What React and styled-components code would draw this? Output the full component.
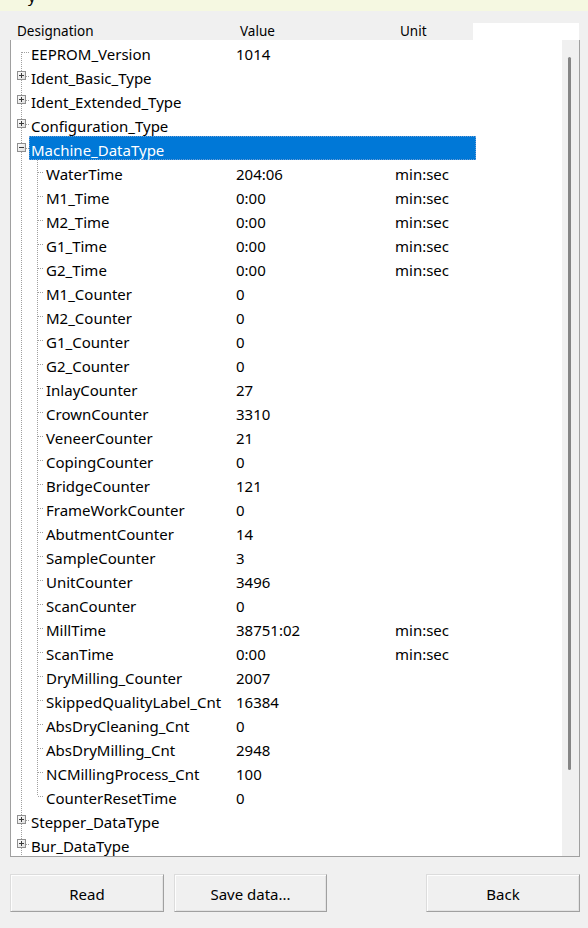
import React from "react";
import styled, { createGlobalStyle } from "styled-components";

const GlobalStyle = createGlobalStyle`
  html, body { margin: 0; padding: 0; background: #f0f0f0; }
  body { font-family: "Noto Sans", "Open Sans", sans-serif; color: #000; }
`;

const Page = styled.div`
  width: 588px;
  height: 928px;
  background: #f0f0f0;
  overflow: hidden;
`;

const TopStrip = styled.div`
  height: 11px;
  background: #f5f8e1;
  overflow: hidden;
`;

const StripText = styled.div`
  margin-top: -16px;
  padding-left: 28px;
  font-size: 15px;
  line-height: 24px;
`;

const Header = styled.div`
  display: flex;
  margin: 12px 0 0 10px;
  width: 569px;
  height: 17px;
`;

const HeaderCells = styled.div`
  display: flex;
  width: 463px;
  padding-left: 7px;
  box-sizing: border-box;
  font-size: 13.5px;
  line-height: 17px;
`;

const HeaderCell = styled.div`
  width: ${(p) => p.$w}px;
  flex: 0 0 auto;
`;

const HeaderFiller = styled.div`
  flex: 1;
  background: #fff;
`;

const TreeBox = styled.div`
  display: flex;
  margin-left: 10px;
  width: 570px;
  height: 817px;
  box-sizing: border-box;
  border: 1px solid #a0a0a0;
  border-top: none;
`;

const TreeContent = styled.div`
  flex: 1;
  background: #fff;
  overflow: hidden;
`;

const ScrollBar = styled.div`
  width: 17px;
  background: #f0f0f0;
  padding-top: 17px;
  box-sizing: border-box;
`;

const Thumb = styled.div`
  width: 3px;
  height: 713px;
  margin-left: 6px;
  background: #858585;
  border-radius: 2px;
`;

const Row = styled.div`
  display: flex;
  height: 24px;
  font-size: 15px;
`;

const Gutter = styled.svg`
  flex: 0 0 auto;
  display: block;
`;

const Body = styled.div`
  display: flex;
  height: 24px;
  box-sizing: border-box;
  padding: 4px 0 0 2px;
  line-height: 20px;
  ${(p) =>
    p.$selected
      ? `width: 447px; flex: 0 0 auto; background: #0078d7; color: #fff; outline: 1px dotted #6b9ed6; outline-offset: -1px;`
      : `flex: 1;`}
`;

const Label = styled.div`
  width: ${(p) => p.$w}px;
  flex: 0 0 auto;
  white-space: nowrap;
`;

const Value = styled.div`
  width: 159px;
  flex: 0 0 auto;
  white-space: nowrap;
`;

const Unit = styled.div`
  flex: 1;
  white-space: nowrap;
`;

const ButtonRow = styled.div`
  display: flex;
  margin-top: 17px;
  padding-left: 10px;
`;

const Button = styled.button`
  width: ${(p) => p.$w}px;
  height: 38px;
  margin-right: ${(p) => p.$gap}px;
  background: #f0f0f0;
  border: 1px solid;
  border-color: #dcdcdc #a0a0a0 #a0a0a0 #dcdcdc;
  box-shadow: inset 1px 1px #fdfdfd, inset -1px -1px #e3e3e3;
  font-family: "Noto Sans", "Open Sans", sans-serif;
  font-size: 15px;
  line-height: 20px;
  padding: 2px 0 0;
  color: #000;
`;

const LINE = "#a0a0a0";

function VLine({ x, y1, y2 }) {
  return (
    <line x1={x + 0.5} y1={y1} x2={x + 0.5} y2={y2} stroke={LINE} strokeDasharray="1 1" shapeRendering="crispEdges" />
  );
}
function HLine({ x1, x2, y }) {
  return (
    <line x1={x1} y1={y + 0.5} x2={x2} y2={y + 0.5} stroke={LINE} strokeDasharray="1 1" shapeRendering="crispEdges" />
  );
}

function ExpandBox({ open }) {
  return (
    <g shapeRendering="crispEdges">
      <defs>
        <linearGradient id="bx" x1="0" y1="0" x2="1" y2="1">
          <stop offset="0" stopColor="#ffffff" />
          <stop offset="1" stopColor="#dcdcdc" />
        </linearGradient>
      </defs>
      <rect x="6.5" y="7.5" width="8" height="8" fill="url(#bx)" stroke="#8f8f8f" />
      <line x1="8" y1="11.5" x2="13" y2="11.5" stroke="#3a3a3a" />
      {!open && <line x1="10.5" y1="9" x2="10.5" y2="14" stroke="#3a3a3a" />}
    </g>
  );
}

function TopGutter({ kind, first }) {
  return (
    <Gutter width="18" height="24" viewBox="0 0 18 24">
      <VLine x={10} y1={first ? 12 : 0} y2={24} />
      {kind === "leaf" ? (
        <HLine x1={11} x2={18} y={12} />
      ) : (
        <>
          <HLine x1={15} x2={18} y={12} />
          <ExpandBox open={kind === "open"} />
        </>
      )}
    </Gutter>
  );
}

function ChildGutter({ last }) {
  return (
    <Gutter width="33" height="24" viewBox="0 0 33 24">
      <VLine x={10} y1={0} y2={24} />
      <VLine x={26} y1={0} y2={last ? 12 : 24} />
      <HLine x1={27} x2={33} y={12} />
    </Gutter>
  );
}

const children = [
  ["WaterTime", "204:06", "min:sec"],
  ["M1_Time", "0:00", "min:sec"],
  ["M2_Time", "0:00", "min:sec"],
  ["G1_Time", "0:00", "min:sec"],
  ["G2_Time", "0:00", "min:sec"],
  ["M1_Counter", "0", ""],
  ["M2_Counter", "0", ""],
  ["G1_Counter", "0", ""],
  ["G2_Counter", "0", ""],
  ["InlayCounter", "27", ""],
  ["CrownCounter", "3310", ""],
  ["VeneerCounter", "21", ""],
  ["CopingCounter", "0", ""],
  ["BridgeCounter", "121", ""],
  ["FrameWorkCounter", "0", ""],
  ["AbutmentCounter", "14", ""],
  ["SampleCounter", "3", ""],
  ["UnitCounter", "3496", ""],
  ["ScanCounter", "0", ""],
  ["MillTime", "38751:02", "min:sec"],
  ["ScanTime", "0:00", "min:sec"],
  ["DryMilling_Counter", "2007", ""],
  ["SkippedQualityLabel_Cnt", "16384", ""],
  ["AbsDryCleaning_Cnt", "0", ""],
  ["AbsDryMilling_Cnt", "2948", ""],
  ["NCMillingProcess_Cnt", "100", ""],
  ["CounterResetTime", "0", ""],
];

function TopRow({ name, value, kind, first, selected }) {
  return (
    <Row>
      <TopGutter kind={kind} first={first} />
      <Body $selected={selected}>
        <Label $w={205}>{name}</Label>
        <Value>{value}</Value>
        <Unit />
      </Body>
    </Row>
  );
}

function ChildRow({ name, value, unit, last }) {
  return (
    <Row>
      <ChildGutter last={last} />
      <Body>
        <Label $w={190}>{name}</Label>
        <Value>{value}</Value>
        <Unit>{unit}</Unit>
      </Body>
    </Row>
  );
}

export default function App() {
  return (
    <Page>
      <GlobalStyle />
      <TopStrip>
        <StripText>y</StripText>
      </TopStrip>
      <Header>
        <HeaderCells>
          <HeaderCell $w={223}>Designation</HeaderCell>
          <HeaderCell $w={160}>Value</HeaderCell>
          <HeaderCell $w={60}>Unit</HeaderCell>
        </HeaderCells>
        <HeaderFiller />
      </Header>
      <TreeBox>
        <TreeContent>
          <TopRow name="EEPROM_Version" value="1014" kind="leaf" first />
          <TopRow name="Ident_Basic_Type" kind="closed" />
          <TopRow name="Ident_Extended_Type" kind="closed" />
          <TopRow name="Configuration_Type" kind="closed" />
          <TopRow name="Machine_DataType" kind="open" selected />
          {children.map(([n, v, u], i) => (
            <ChildRow key={n} name={n} value={v} unit={u} last={i === children.length - 1} />
          ))}
          <TopRow name="Stepper_DataType" kind="closed" />
          <TopRow name="Bur_DataType" kind="closed" />
        </TreeContent>
        <ScrollBar>
          <Thumb />
        </ScrollBar>
      </TreeBox>
      <ButtonRow>
        <Button $w={154} $gap={10}>Read</Button>
        <Button $w={153} $gap={99}>Save data...</Button>
        <Button $w={154} $gap={0}>Back</Button>
      </ButtonRow>
    </Page>
  );
}
